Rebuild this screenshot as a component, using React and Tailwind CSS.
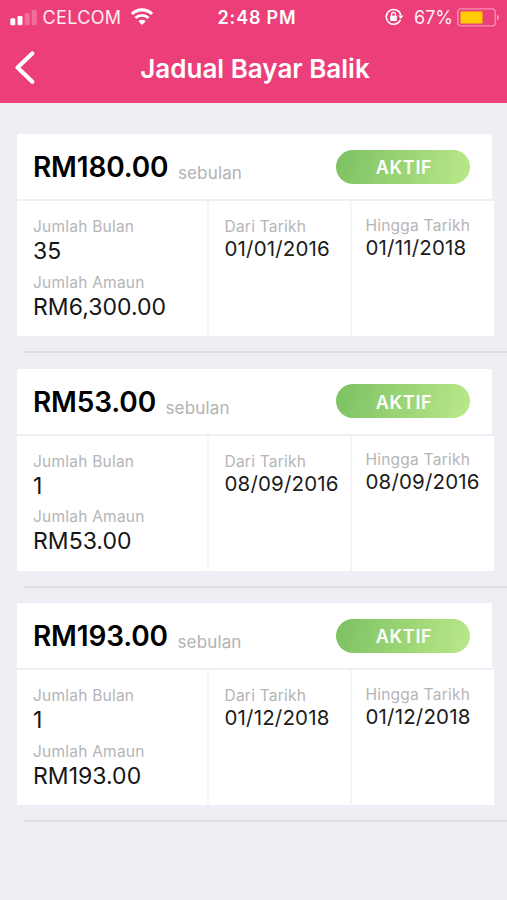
const plans = [
  { monthly: 'RM180.00', months: '35', total: 'RM6,300.00', from: '01/01/2016', to: '01/11/2018' },
  { monthly: 'RM53.00', months: '1', total: 'RM53.00', from: '08/09/2016', to: '08/09/2016' },
  { monthly: 'RM193.00', months: '1', total: 'RM193.00', from: '01/12/2018', to: '01/12/2018' },
];

function Label({ children }) {
  return <div className="text-[15.5px] leading-5 tracking-[0.23px] text-[#b5b5b7]">{children}</div>;
}

function Amount({ children }) {
  return <div className="text-[23px] leading-7 tracking-[0.03px] text-[#161616]">{children}</div>;
}

function DateText({ children }) {
  return <div className="text-[20.5px] leading-6 tracking-[0.17px] text-[#1c1c1c]">{children}</div>;
}

function StatusBar() {
  return (
    <div className="grid h-[34px] grid-cols-[1fr_auto_1fr] items-center text-[18px] text-white">
      <div className="flex items-center pl-[10px]">
        <svg width="27" height="17" viewBox="0 0 27 17" fill="#fff" className="mt-px shrink-0">
          <rect x="0.3" y="9.2" width="5" height="7" rx="1.2" />
          <rect x="7.5" y="7" width="5" height="9.2" rx="1.2" />
          <rect x="14.7" y="4" width="5" height="12.2" rx="1.2" opacity="0.25" />
          <rect x="21.7" y="0.7" width="5" height="15.5" rx="1.2" opacity="0.25" />
        </svg>
        <span className="ml-[5.5px] text-[18px] tracking-[0.35px] text-white/90">CELCOM</span>
        <svg width="24" height="18" viewBox="0 0 24 18" fill="none" stroke="#fff" className="ml-[9px] shrink-0">
          <path d="M1.9 6a14.5 14.5 0 0 1 20.2 0" strokeWidth="3.1" />
          <path d="M5.4 10.1a9.5 9.5 0 0 1 13.2 0" strokeWidth="2.8" />
          <path d="M12 17l-3.6-3.8a5.2 5.2 0 0 1 7.2 0z" fill="#fff" stroke="none" />
        </svg>
      </div>
      <span className="pl-[7px] font-semibold tracking-[0.8px]">2:48 PM</span>
      <div className="flex items-center justify-end pr-[7px]">
        <svg width="19" height="18" viewBox="0 0 19 18" fill="none" stroke="#fff" className="shrink-0">
          <path d="M15.5 11.7A7.4 7.4 0 1 1 15.8 7" strokeWidth="1.5" />
          <path d="M13.2 7.4h5.2l-2.6 3.6z" fill="#fff" stroke="none" />
          <rect x="5.2" y="7.7" width="6.6" height="5.2" rx="0.7" fill="#fff" stroke="none" />
          <path d="M6.6 8V6.3a1.9 1.9 0 0 1 3.8 0V8" strokeWidth="1.3" />
        </svg>
        <span className="ml-[9.5px] text-[18px] text-white/95">67%</span>
        <svg width="43" height="19" viewBox="0 0 43 19" className="ml-[4px] shrink-0">
          <rect x="0.8" y="0.9" width="37.4" height="17" rx="3.2" fill="none" stroke="#fff" strokeOpacity="0.42" strokeWidth="1.4" />
          <rect x="3.5" y="3.5" width="22" height="12" fill="#ffcc00" />
          <path d="M40 6.6c2.6 1 2.6 4.8 0 5.8z" fill="#fff" fillOpacity="0.5" />
        </svg>
      </div>
    </div>
  );
}

function PlanCard({ plan }) {
  return (
    <section className="h-[234.4px]">
      <div className="ml-[17px] flex h-[65px] w-[475px] items-center justify-between rounded-t-[2px] bg-white pr-[22px] pl-4">
        <div className="flex items-baseline pt-[2px]">
          <span className="text-[28px] leading-8 font-semibold tracking-[-0.15px] text-black">{plan.monthly}</span>
          <span className="relative top-[2px] ml-[9.5px] text-[17px] tracking-[0.15px] text-[#b2b2b4]">sebulan</span>
        </div>
        <span className="flex h-[34px] w-[134px] items-center justify-center rounded-full bg-linear-[105deg] from-[#7cc162] to-[#bae889] pt-[2px] pl-[2px] text-[18px] font-semibold tracking-[0.7px] text-white">
          AKTIF
        </span>
      </div>
      <div className="mt-[2px] ml-[17px] grid h-[135px] w-[477px] grid-cols-[190px_141px_142px] gap-[2px] rounded-b-[2px] bg-[#f5f5f8]">
        <div className="bg-white pt-4 pl-4">
          <Label>Jumlah Bulan</Label>
          <Amount>{plan.months}</Amount>
          <div className="mt-[7.6px]">
            <Label>Jumlah Amaun</Label>
            <Amount>{plan.total}</Amount>
          </div>
        </div>
        <div className="bg-white pt-4 pl-[15.5px]">
          <Label>Dari Tarikh</Label>
          <DateText>{plan.from}</DateText>
        </div>
        <div className="bg-white pt-[14.6px] pl-[13.5px]">
          <Label>Hingga Tarikh</Label>
          <DateText>{plan.to}</DateText>
        </div>
      </div>
      <div className="mt-[15px] ml-6 h-[2px] bg-[#dfdee4]" />
    </section>
  );
}

export default function App() {
  return (
    <div className="h-[900px] w-[507px] overflow-hidden bg-[#efeef4] font-['Inter','Liberation_Sans',sans-serif]">
      <header className="h-[102.5px] bg-[#ec3e79]">
        <StatusBar />
        <div className="grid h-[68px] grid-cols-[60px_1fr_57px] items-center text-white">
          <svg width="22" height="36" viewBox="0 0 22 36" fill="none" stroke="#fff" strokeWidth="4.2" strokeLinecap="round" strokeLinejoin="round" className="ml-[14px]">
            <path d="M18.3 3.5L3.5 17.5l14.8 14.3" />
          </svg>
          <h1 className="text-center text-[26px] font-semibold">Jadual Bayar Balik</h1>
        </div>
      </header>
      <main className="pt-[31.9px]">
        {plans.map((plan) => (
          <PlanCard key={plan.monthly} plan={plan} />
        ))}
      </main>
    </div>
  );
}
